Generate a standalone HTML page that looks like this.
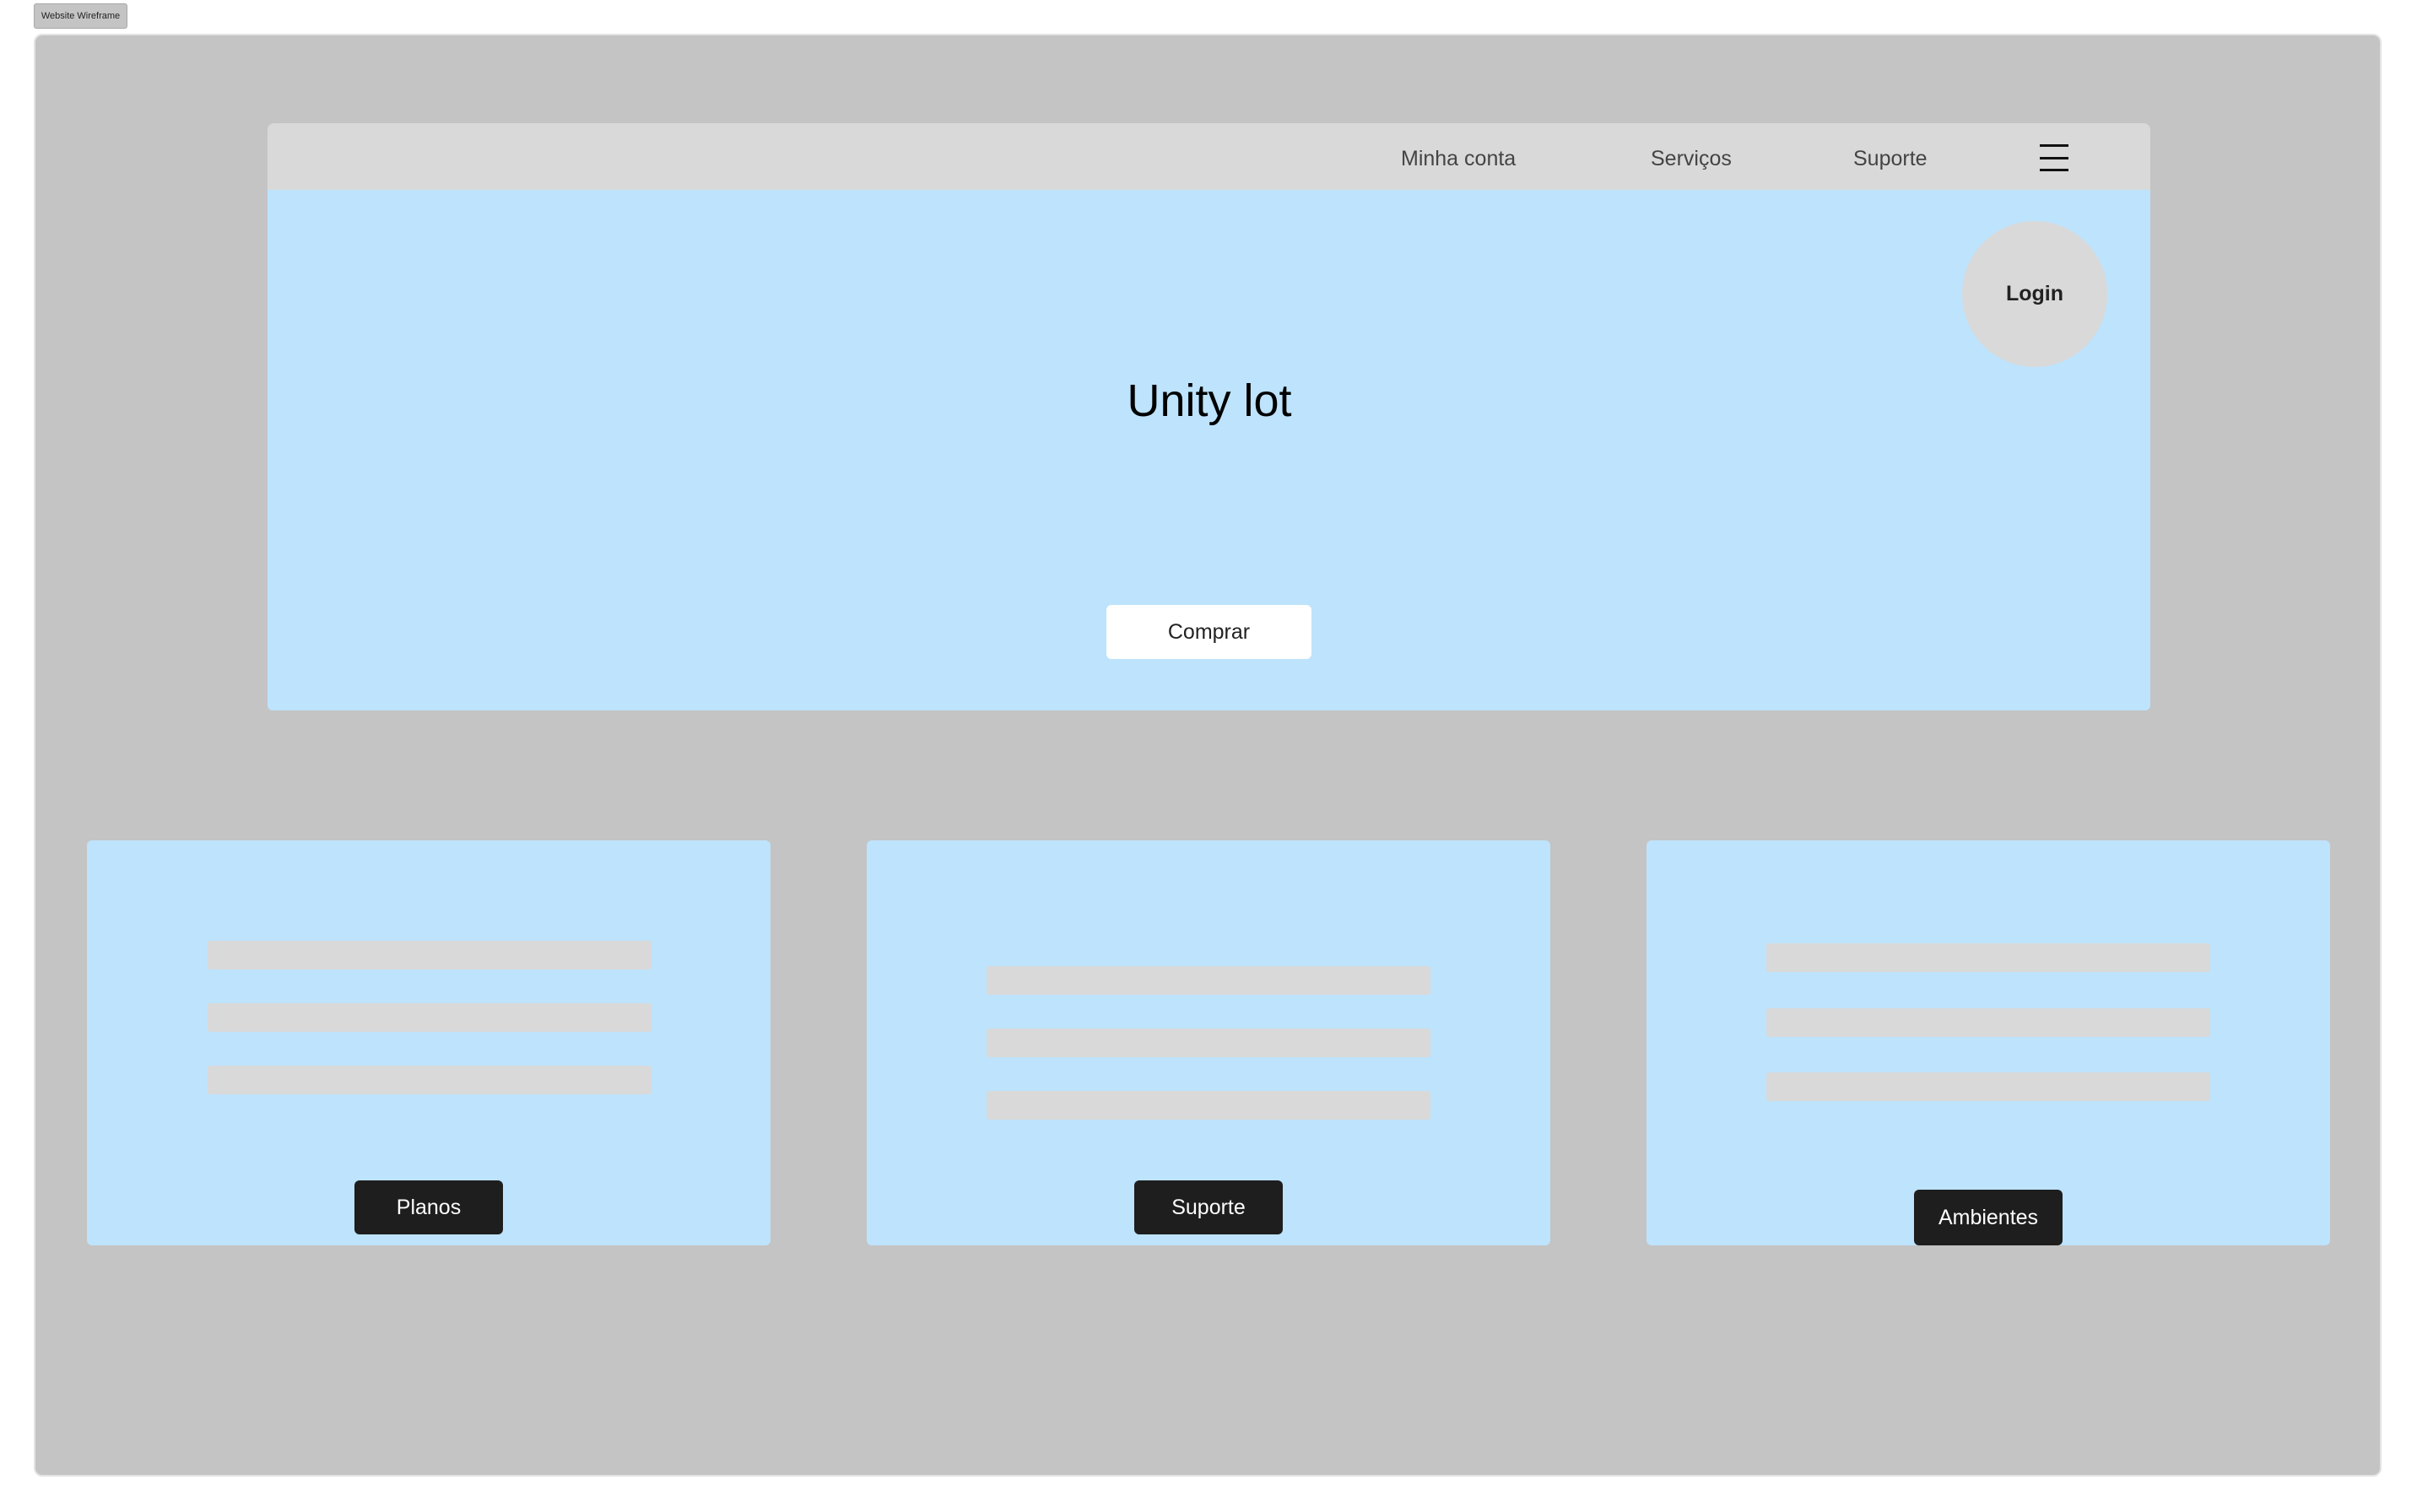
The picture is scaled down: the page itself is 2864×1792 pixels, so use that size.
<!DOCTYPE html>
<html><head><meta charset="utf-8"><style>
*{margin:0;padding:0;box-sizing:border-box}
body{width:2864px;height:1792px;background:#fff;position:relative;overflow:hidden;font-family:"Liberation Sans",sans-serif}
.a{position:absolute}
.tag{left:40px;top:4px;width:111px;height:30px;background:#c4c4c4;border:1px solid #a8a8a8;border-radius:3px;font-size:11px;color:#222;line-height:28px;text-align:center}
.frame{left:40px;top:40px;width:2782px;height:1710px;background:#c4c4c4;border:2px solid #e3e3e3;border-radius:10px}
.hdr{left:317px;top:146px;width:2231px;height:79px;background:#d9d9d9;border-radius:8px 8px 0 0}
.hero{left:317px;top:225px;width:2231px;height:617px;background:#bee3fc;border-radius:0 0 6px 6px}
.nav{font-size:25px;color:#444;top:172px;line-height:32px}
.hb{left:2417px;width:34px;height:3px;background:#111}
.login{left:2325px;top:262px;width:172px;height:173px;border-radius:50%;background:#d9d9d9;font-weight:bold;font-size:25px;color:#222;text-align:center;line-height:173px}
.title{left:1200px;width:466px;top:440px;text-align:center;font-size:54px;color:#000;line-height:70px}
.buy{left:1311px;top:717px;width:243px;height:64px;background:#fff;border-radius:6px;font-size:25px;color:#222;text-align:center;line-height:64px}
.card{top:996px;width:810px;height:480px;background:#bee3fc;border-radius:6px}
.bar{width:526px;height:34px;background:#d9d9d9;border-radius:3px}
.btn{width:176px;height:64px;background:#1e1e1e;border-radius:6px;color:#fff;font-size:25px;text-align:center;line-height:64px}
</style></head><body>
<div class="a tag">Website Wireframe</div>
<div class="a frame"></div>
<div class="a hdr"></div>
<div class="a hero"></div>
<div class="a nav" style="left:1660px">Minha conta</div>
<div class="a nav" style="left:1956px">Serviços</div>
<div class="a nav" style="left:2196px">Suporte</div>
<div class="a hb" style="top:171px"></div>
<div class="a hb" style="top:186px"></div>
<div class="a hb" style="top:200px"></div>
<div class="a login">Login</div>
<div class="a title">Unity lot</div>
<div class="a buy">Comprar</div>

<div class="a card" style="left:103px"></div>
<div class="a card" style="left:1027px"></div>
<div class="a card" style="left:1951px"></div>

<div class="a bar" style="left:246px;top:1115px"></div>
<div class="a bar" style="left:246px;top:1189px"></div>
<div class="a bar" style="left:246px;top:1263px"></div>

<div class="a bar" style="left:1169px;top:1145px"></div>
<div class="a bar" style="left:1169px;top:1219px"></div>
<div class="a bar" style="left:1169px;top:1293px"></div>

<div class="a bar" style="left:2093px;top:1118px"></div>
<div class="a bar" style="left:2093px;top:1195px"></div>
<div class="a bar" style="left:2093px;top:1271px"></div>

<div class="a btn" style="left:420px;top:1399px">Planos</div>
<div class="a btn" style="left:1344px;top:1399px">Suporte</div>
<div class="a btn" style="left:2268px;top:1410px;height:66px;line-height:66px">Ambientes</div>
</body></html>
